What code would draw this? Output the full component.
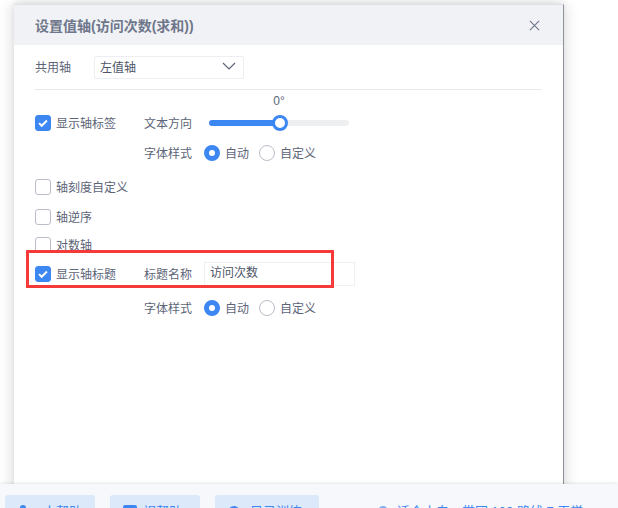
<div class="page">
  <div class="stage">
    <div class="dialog">
      <header class="head">
        <h1>设置值轴(访问次数(求和))</h1>
        <svg class="close" viewBox="0 0 12 12"><path d="M1 1l10 10M11 1L1 11" /></svg>
      </header>
      <div class="body">
        <div class="share">
          <span class="lab">共用轴</span>
          <div class="select">
            <span>左值轴</span>
            <svg viewBox="0 0 14 8"><path d="M1 1l6 6 6-6" /></svg>
          </div>
        </div>
        <div class="rule"></div>
        <div class="deg">0°</div>
        <div class="row r1">
          <span class="box on"><svg viewBox="0 0 16 16"><path d="M3.5 8.2l3 3 6-6" /></svg></span>
          <span class="name">显示轴标签</span>
          <span class="lab2">文本方向</span>
          <div class="slider"><div class="fill"></div><div class="knob"></div></div>
        </div>
        <div class="row r2">
          <span class="lab2 indent">字体样式</span>
          <span class="radio on"></span><span class="opt">自动</span>
          <span class="radio"></span><span class="opt">自定义</span>
        </div>
        <div class="row r3"><span class="box"></span><span class="name">轴刻度自定义</span></div>
        <div class="row r4"><span class="box"></span><span class="name">轴逆序</span></div>
        <div class="row r5"><span class="box"></span><span class="name">对数轴</span></div>
        <div class="row r6">
          <span class="box on"><svg viewBox="0 0 16 16"><path d="M3.5 8.2l3 3 6-6" /></svg></span>
          <span class="name">显示轴标题</span>
          <span class="lab2">标题名称</span>
          <div class="input">访问次数</div>
        </div>
        <div class="row r7">
          <span class="lab2 indent">字体样式</span>
          <span class="radio on"></span><span class="opt">自动</span>
          <span class="radio"></span><span class="opt">自定义</span>
        </div>
      </div>
      <div class="mark"></div>
    </div>
  </div>
  <footer class="foot">
    <div class="pill p1"><span class="ic person"></span>人帮助</div>
    <div class="pill p2"><span class="ic sq"></span>视帮助</div>
    <div class="pill p3"><span class="ic dome"></span>目录训练</div>
    <div class="note"><span class="ic rings"></span>适合小白，带团 100 路线 7 天学</div>
  </footer>
</div>

<style>
  :global(body) { margin: 0; background: #fff; }
  .page { width: 618px; height: 508px; overflow: hidden; font-family: "Liberation Sans", "Noto Sans CJK SC", sans-serif; color: #5c6478; font-size: 12px; display: flex; flex-direction: column; }
  .stage { height: 484px; flex: none; padding: 4px 0 0 14px; box-sizing: border-box; overflow: hidden; }
  .dialog { position: relative; width: 550px; height: 490px; background: #fff; border-top: 1px solid #dfe1e6; border-right: 1px solid #8f939b; box-shadow: -6px 0 10px rgba(0,0,0,.08), 6px 0 10px rgba(0,0,0,.07), 0 -3px 6px rgba(0,0,0,.06); box-sizing: border-box; }
  .head { height: 40px; background: #f0f2f6; display: flex; align-items: center; justify-content: space-between; padding: 0 23px 0 21px; }
  h1 { margin: 0; font-size: 14px; font-weight: 700; color: #6f778a; }
  .close { width: 11px; height: 11px; fill: none; stroke: #6f778a; stroke-width: 1.2; }
  .body { padding: 0 21px; }
  .share { display: flex; align-items: center; height: 44px; }
  .lab { width: 59px; flex: none; padding-bottom: 2px; }
  .select { width: 150px; height: 23px; border: 1px solid #eceef1; border-radius: 2px; box-sizing: border-box; display: flex; align-items: center; justify-content: space-between; padding: 0 4px 2px 5px; color: #4d5567; }
  .select svg { width: 14px; height: 8px; fill: none; stroke: #5c6478; stroke-width: 1.2; margin-right: 3px; }
  .rule { height: 1px; background: #e8e9ec; }
  .deg { text-align: center; width: 488px; height: 19px; line-height: 22px; }
  .row { display: flex; align-items: center; height: 20px; }
  .r1 { margin-top: 4px; }
  .r2 { margin-top: 10px; }
  .r3 { margin-top: 14px; }
  .r4 { margin-top: 10px; }
  .r5 { margin-top: 8px; }
  .r6 { margin-top: 9px; }
  .r7 { margin-top: 14px; }
  .box { width: 16px; height: 16px; box-sizing: border-box; border: 1px solid #b9bec9; border-radius: 3px; background: #fff; margin-right: 5px; flex: none; }
  .box.on { background: #3d87f2; border-color: #3d87f2; }
  .box svg { display: block; width: 14px; height: 14px; fill: none; stroke: #fff; stroke-width: 2.2; }
  .name { width: 88px; flex: none; padding-bottom: 2px; }
  .lab2 { width: 60px; flex: none; padding-bottom: 2px; }
  .indent { margin-left: 109px; }
  .slider { position: relative; width: 140px; height: 6px; margin-left: 5px; border-radius: 3px; background: #eeeff1; flex: none; }
  .fill { width: 70px; height: 6px; border-radius: 3px; background: #3d87f2; }
  .knob { position: absolute; left: 63px; top: -5px; width: 16px; height: 16px; box-sizing: border-box; border: 3px solid #3d87f2; border-radius: 50%; background: #fff; }
  .radio { width: 16px; height: 16px; box-sizing: border-box; border-radius: 50%; border: 1px solid #b9bec9; flex: none; margin-right: 5px; }
  .radio.on { border: 5px solid #3d87f2; }
  .opt { width: 34px; flex: none; white-space: nowrap; padding-bottom: 2px; }
  .input { width: 151px; height: 24px; box-sizing: border-box; border: 1px solid #eef0f2; line-height: 21px; padding-left: 5px; color: #4d5567; flex: none; }
  .mark { position: absolute; left: 12px; top: 245px; width: 308px; height: 38px; border: 3px solid #f53a3a; box-sizing: border-box; }
  .foot { flex: 1; background: #f7f8fc; display: flex; padding-top: 11px; padding-left: 5px; box-sizing: border-box; box-shadow: 0 -1px 3px rgba(0,0,0,.1); position: relative; color: #3d87f2; font-size: 13px; line-height: 18px; }
  .pill { flex: none; width: 90px; height: 30px; background: #dbe9fb; border-radius: 3px; margin-right: 15px; display: flex; box-sizing: border-box; padding-top: 8px; white-space: nowrap; }
  .p1 { padding-left: 15px; }
  .p2 { padding-left: 13px; }
  .p3 { width: 104px; padding-left: 13px; }
  .ic { flex: none; display: block; background: #3d87f2; margin-top: 2px; }
  .person { width: 6px; height: 10px; border-radius: 3px 3px 0 0; margin: 2px 17px 0 0; }
  .sq { width: 14px; height: 12px; border-radius: 2px; margin-right: 6px; }
  .dome { width: 12px; height: 12px; border-radius: 50%; margin-top: 3px; margin-right: 10px; }
  .note { flex: none; margin-left: 44px; padding-top: 8px; white-space: nowrap; display: flex; }
  .rings { width: 10px; height: 10px; margin-right: 9px; background: #7fb0f5; border-radius: 50%; margin-top: 3px; }
</style>
